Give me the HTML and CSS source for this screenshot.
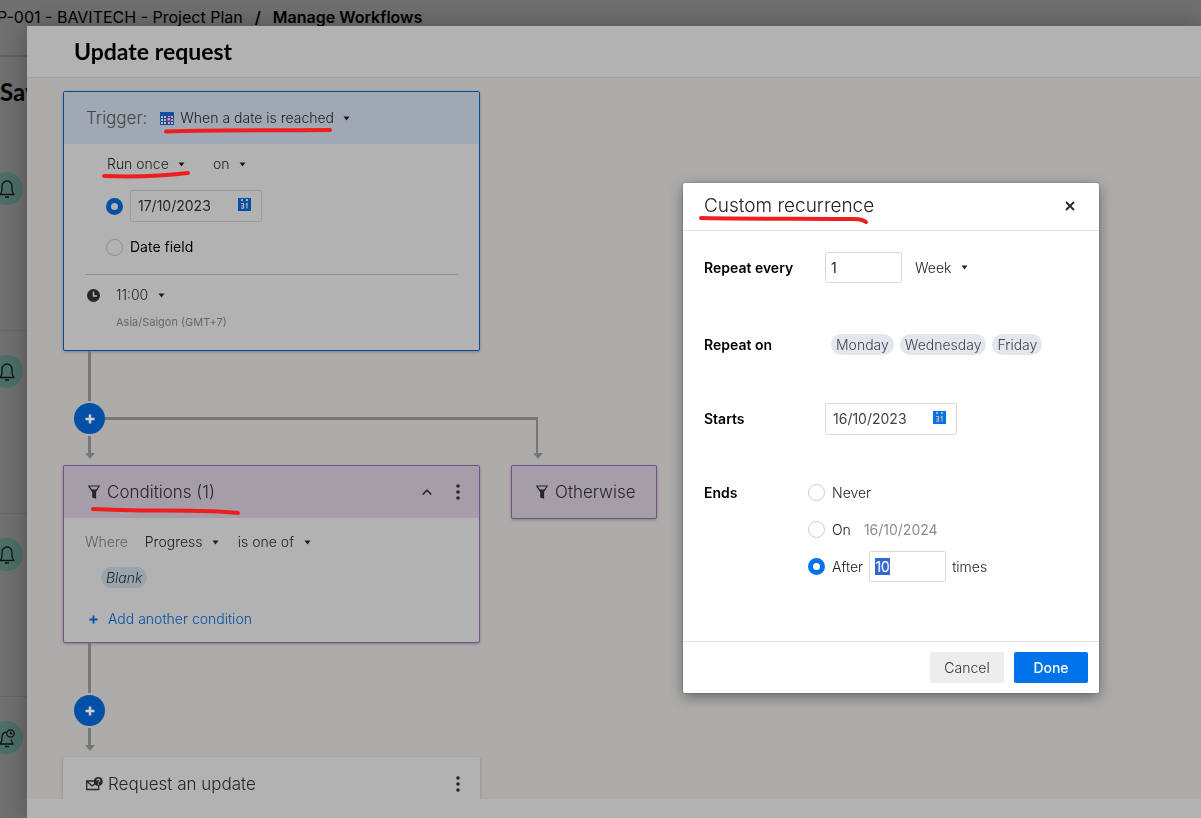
FILE: index.html
```html
<!DOCTYPE html>
<html lang="en">
<head>
<meta charset="utf-8">
<title>Manage Workflows</title>
<link rel="stylesheet" href="styles.css">
</head>
<body>
<svg class="sprite" aria-hidden="true">
  <symbol id="bell" viewBox="0 0 20 20"><path d="M3 15.500h14c-1.500-1.500-2-2.500-2-5V7A5 5 0 0 0 5 7v3.500c0 2.500-.5 3.500-2 5z" fill="none" stroke="currentColor" stroke-width="1.300" stroke-linejoin="round"/><path d="M8 18h4" stroke="currentColor" stroke-width="1.500"/></symbol>
  <symbol id="bell-clock" viewBox="0 0 20 20"><path d="M9.500 4C6.500 4.500 5 6.500 5 9v2c0 2-.5 3-2 5h13c-1-1.500-1.500-2.500-1.700-4.500" fill="none" stroke="currentColor" stroke-width="1.300"/><circle cx="13.500" cy="5.500" r="3.700" fill="none" stroke="currentColor" stroke-width="1.300"/><path d="M13.500 3.500v2h1.800M8 18.500h4" fill="none" stroke="currentColor" stroke-width="1.300"/></symbol>
  <symbol id="caret" viewBox="0 0 6 5"><path d="M0 0.500h6L3 4.500z" fill="currentColor"/></symbol>
  <symbol id="plus" viewBox="0 0 10 10"><path d="M5 0.500v9M0.500 5h9" stroke="currentColor" stroke-width="2.500"/></symbol>
  <symbol id="plus-thin" viewBox="0 0 10 10"><path d="M5 0.500v9M0.500 5h9" stroke="currentColor" stroke-width="2"/></symbol>
  <symbol id="funnel" viewBox="0 0 12 14"><path d="M.8 1h10.400L7.500 6.800V13L4.800 12V6.800z" fill="none" stroke="currentColor" stroke-width="1.200"/><path d="M2.500 4.500h7L7.200 7.500V13L5 12V7.500z" fill="currentColor"/></symbol>
  <symbol id="dots" viewBox="0 0 4 16"><circle cx="2" cy="2" r="1.800" fill="currentColor"/><circle cx="2" cy="8" r="1.800" fill="currentColor"/><circle cx="2" cy="14" r="1.800" fill="currentColor"/></symbol>
  <symbol id="calendar" viewBox="0 0 13 13"><path d="M0 0h13v13H0z" fill="currentColor"/><path class="cal-ink" d="M3 1h2v2H3zM8 1h2v2H8z"/><path class="cal-line" d="M3 5.500h2.600v4.600H3M3.500 7.800h2M7.800 6.500 9 5.500v5" fill="none" stroke-width="1.200"/></symbol>
</svg>

<div class="page">
  <nav class="breadcrumb" aria-label="Breadcrumb">
    <span>P-001 - BAVITECH - Project Plan</span><b>/</b><b>Manage Workflows</b>
  </nav>
  <h2 class="saved-title">Saved</h2>
  <ul class="saved-list">
    <li><span class="badge"><svg><use href="#bell"/></svg></span></li>
    <li><span class="badge"><svg><use href="#bell"/></svg></span></li>
    <li><span class="badge"><svg><use href="#bell"/></svg></span></li>
    <li><span class="badge"><svg><use href="#bell-clock"/></svg></span></li>
  </ul>
</div>

<main class="panel">
  <header class="panel-head"><h1>Update request</h1></header>
  <div class="canvas">
    <div class="flow">
      <section class="card trigger">
        <div class="card-head">
          <label class="title" for="event">Trigger:</label>
          <span class="event marked">
            <svg class="grid-icon" viewBox="0 0 14 13"><path d="M0 0h14v13H0z" fill="#0b50a5"/><path d="M1 4h2v2H1zM4 4h2v2H4zM8 4h2v2H8zM11 4h2v2h-2zM1 7h2v2H1zM4 7h2v2H4zM11 7h2v2h-2zM1 10h2v2H1zM4 10h2v2H4zM8 10h2v2H8zM11 10h2v2h-2z" fill="#b2b8c0"/><path d="M7 5.500h3.500v3.500H7z" fill="#b2b8c0" stroke="#b01060" stroke-width="1.200"/></svg>
            <span class="pick"><select id="event"><option>When a date is reached</option></select><svg class="caret"><use href="#caret"/></svg></span>
            <svg class="mark mark-event" viewBox="0 0 168 6"><path d="M2 3.500C50 1.500 100 2.500 166 2"/></svg>
          </span>
        </div>
        <div class="trigger-body">
          <div class="row run-row">
            <span class="pick marked"><select aria-label="Frequency"><option>Run once</option></select><svg class="caret"><use href="#caret"/></svg>
              <svg class="mark mark-run" viewBox="0 0 88 8"><path d="M2 5C30 6 60 5 86 2"/></svg></span>
            <span class="pick"><select aria-label="Run on"><option>on</option></select><svg class="caret"><use href="#caret"/></svg></span>
          </div>
          <div class="row date-row">
            <input class="radio" type="radio" name="when" aria-label="On date" checked>
            <span class="date-box"><input type="text" aria-label="Date" value="17/10/2023"><svg><use href="#calendar"/></svg></span>
          </div>
          <label class="row field-row"><input class="radio" type="radio" name="when">Date field</label>
          <div class="time">
            <svg class="clock" viewBox="0 0 13 13"><circle cx="6.500" cy="6.500" r="6.500" fill="#262626"/><path d="M6.500 2.500v4.500h3.500" fill="none" stroke="#b2b2b2" stroke-width="1.500"/></svg>
            <span class="pick"><select aria-label="Time"><option>11:00</option></select><svg class="caret"><use href="#caret"/></svg></span>
            <small>Asia/Saigon (GMT+7)</small>
          </div>
        </div>
      </section>

      <div class="link">
        <div class="stem">
          <i class="line"></i>
          <button class="add" type="button" aria-label="Add step"><svg><use href="#plus"/></svg></button>
          <svg class="arrow" viewBox="0 0 10 23"><path d="M3 0h3v17h4L5 23 0 17h3z"/></svg>
        </div>
        <svg class="branch" viewBox="0 0 440 42"><path d="M0 0h433v36h5L433 42 428 36h3V3H0z"/></svg>
      </div>

      <section class="card conditions">
        <div class="card-head">
          <svg class="funnel"><use href="#funnel"/></svg>
          <h2 class="title marked">Conditions (1)
            <svg class="mark mark-cond" viewBox="0 0 150 8"><path d="M2 2C50 5 110 2 147 6"/></svg></h2>
          <span class="tools">
            <button class="icon-btn" type="button" aria-label="Collapse"><svg class="chevron" viewBox="0 0 10 6"><path d="M.7 5.500 5 1.200l4.300 4.300" fill="none" stroke="currentColor" stroke-width="1.600"/></svg></button>
            <button class="icon-btn" type="button" aria-label="More"><svg class="dots"><use href="#dots"/></svg></button>
          </span>
        </div>
        <div class="cond-body">
          <div class="row where">
            <span>Where</span>
            <span class="pick"><select aria-label="Field"><option>Progress</option></select><svg class="caret"><use href="#caret"/></svg></span>
            <span class="pick"><select aria-label="Operator"><option>is one of</option></select><svg class="caret"><use href="#caret"/></svg></span>
          </div>
          <em class="pill blank">Blank</em>
          <button class="add-cond" type="button"><svg><use href="#plus-thin"/></svg>Add another condition</button>
        </div>
      </section>
      <section class="card otherwise">
        <svg class="funnel"><use href="#funnel"/></svg><h2 class="title">Otherwise</h2>
      </section>

      <div class="link">
        <div class="stem">
          <i class="line"></i>
          <button class="add" type="button" aria-label="Add step"><svg><use href="#plus"/></svg></button>
          <svg class="arrow" viewBox="0 0 10 23"><path d="M3 0h3v17h4L5 23 0 17h3z"/></svg>
        </div>
      </div>

      <section class="card request">
        <div class="card-head">
          <svg class="mail" viewBox="0 0 17 14"><path d="M8 4H.700v8.500h12V9M.700 4.300l5.500 4.700 3-2.500" fill="none" stroke="#262626" stroke-width="1.300"/><circle cx="12.300" cy="4.500" r="4.500" fill="#262626"/><path d="M10.800 3.600c.1-2 3-1.900 3 0 0 1-1.500 1-1.500 2M12.300 6.500v1.200" fill="none" stroke="#b2b2b2" stroke-width="1.100"/></svg>
          <h2 class="title">Request an update</h2>
          <span class="tools"><button class="icon-btn" type="button" aria-label="More"><svg class="dots"><use href="#dots"/></svg></button></span>
        </div>
      </section>
    </div>
  </div>
  <footer class="panel-foot"></footer>
</main>

<form class="dialog" role="dialog" aria-labelledby="dialog-title">
  <header class="dialog-head">
    <h2 id="dialog-title" class="marked">Custom recurrence
      <svg class="mark mark-dialog" viewBox="0 0 170 8"><path d="M2 2C60 3 100 2.500 155 3Q163 3 167 6"/></svg></h2>
    <button class="icon-btn" type="button" aria-label="Close"><svg class="close" viewBox="0 0 10 10"><path d="m1 1 8 8M9 1 1 9" stroke="currentColor" stroke-width="1.800"/></svg></button>
  </header>
  <div class="dialog-body">
    <div class="form-row">
      <label class="name" for="every">Repeat every</label>
      <input class="num" id="every" type="text" value="1">
      <span class="pick unit"><select aria-label="Unit"><option>Week</option></select><svg class="caret"><use href="#caret"/></svg></span>
    </div>
    <div class="form-row days">
      <span class="name">Repeat on</span>
      <span class="pills"><span class="pill">Monday</span><span class="pill">Wednesday</span><span class="pill">Friday</span></span>
    </div>
    <div class="form-row">
      <label class="name" for="starts">Starts</label>
      <span class="date-box"><input id="starts" type="text" value="16/10/2023"><svg><use href="#calendar"/></svg></span>
    </div>
    <div class="form-row ends">
      <span class="name">Ends</span>
      <div class="choices">
        <label class="choice"><input class="radio" type="radio" name="ends">Never</label>
        <div class="choice"><label><input class="radio" type="radio" name="ends">On</label><span class="muted">16/10/2024</span></div>
        <div class="choice after"><label><input class="radio" type="radio" name="ends" checked>After</label><input class="num" id="times" type="text" value="10" aria-label="Number of times"><span>times</span></div>
      </div>
    </div>
  </div>
  <footer class="dialog-foot">
    <button class="btn" type="button">Cancel</button>
    <button class="btn primary" type="button">Done</button>
  </footer>
</form>
<script src="script.js"></script>
</body>
</html>
```
FILE: styles.css
```css
* { box-sizing: border-box; }
html, body { height: 100%; }
body {
  margin: 0;
  overflow: hidden;
  background: #707070;
  color: #1c1c1c;
  font: 300 14px/20px Inter, "Liberation Sans", sans-serif;
}
h1, h2, ul { margin: 0; padding: 0; font-weight: inherit; font-size: inherit; }
button, input, select { font: inherit; color: inherit; margin: 0; padding: 0; border: 0; background: none; outline: none; }
svg { display: block; flex: none; }
.sprite { position: absolute; width: 0; height: 0; }

/* page under the panel */
.page { height: 100%; overflow: hidden; }
.breadcrumb {
  display: flex;
  gap: 12px;
  height: 57px;
  padding-top: 7px;
  margin-left: -3px;
  border-bottom: 2px solid #606060;
  color: #000;
  font-size: 16px;
  font-weight: 400;
  white-space: nowrap;
}
.breadcrumb b { font-weight: 600; }
.saved-title { height: 91px; padding-top: 19px; font: 700 24px/32px Lato, sans-serif; color: #000; }
.saved-list { list-style: none; }
.saved-list li { display: flex; align-items: center; height: 183px; padding-bottom: 101px; border-bottom: 1px solid #666; }
.badge {
  display: flex;
  align-items: center;
  justify-content: center;
  width: 33px;
  height: 33px;
  margin-left: -10px;
  border-radius: 50%;
  background: #4c6f67;
  color: #101515;
}
.badge svg { width: 20px; height: 20px; }

/* panel */
.panel {
  position: fixed;
  inset: 26px 0 0 27px;
  display: flex;
  flex-direction: column;
  background: #b2b2b2;
  box-shadow: 0 0 24px rgba(0, 0, 0, 0.3);
}
.panel-head { height: 52px; padding: 9px 47px; border-bottom: 1px solid #9f9f9f; }
.panel-head h1 { font: 700 23px/32px Lato, sans-serif; color: #000; }
.canvas { flex: 1; min-height: 0; overflow: hidden; padding: 13px 36px; background: #adacaa; }
.panel-foot { height: 19px; flex: none; }

.flow {
  display: grid;
  grid-template-columns: 417px 146px;
  column-gap: 31px;
  align-items: start;
}
.card { grid-column: 1; border: 1px solid; border-radius: 2px; background: #b2b2b2; box-shadow: 0 1px 3px rgba(0, 0, 0, 0.25); }
.card-head { display: flex; align-items: center; height: 52px; padding: 0 16px 0 22px; }
.title { font-size: 17px; line-height: 24px; font-weight: 300; color: #262626; white-space: nowrap; }
.trigger { border-color: #084a9c; }
.trigger .card-head { background: #a0a9b3; gap: 13px; }
.trigger .title { color: #444; }
.event { display: flex; align-items: center; gap: 6px; }
.grid-icon { width: 14px; height: 13px; }

.pick { display: inline-flex; align-items: center; gap: 9px; }
.pick select { appearance: none; height: 24px; }
.caret { width: 7px; height: 5px; }

.trigger-body { padding: 8px 21px 18px; }
.row { display: flex; align-items: center; }
.run-row { gap: 28px; padding-left: 22px; height: 24px; }
.date-row, .field-row { gap: 7px; padding-left: 21px; }
.date-row { margin-top: 14px; }
.field-row { margin-top: 15px; color: #000; font-weight: 400; }
.radio {
  appearance: none;
  flex: none;
  width: 17px;
  height: 17px;
  border: 1px solid #8c8c8c;
  border-radius: 50%;
}
.radio:checked { border: 5px solid #0350a6; }
.date-box {
  display: flex;
  align-items: center;
  width: 132px;
  height: 32px;
  padding: 0 10px 0 7px;
  border: 1px solid #9a9a9a;
  border-radius: 2px;
  color: #0350a6;
}
.date-box input { flex: 1; min-width: 0; color: #262626; font-weight: 400; }
.date-box svg { width: 13px; height: 13px; margin-bottom: 4px; }
.cal-ink { fill: #b2b2b2; }
.cal-line { stroke: #b2b2b2; }
.time {
  display: grid;
  grid-template-columns: 31px 1fr;
  align-items: center;
  row-gap: 5px;
  margin-top: 17px;
  padding-top: 8px;
  border-top: 1px solid #8f8f8f;
}
.clock { width: 13px; height: 13px; margin-left: 2px; }
.time small { grid-column: 2; font-size: 11px; font-weight: 400; color: #666; }

/* connectors */
.link { grid-column: 1 / -1; display: flex; height: 114px; padding-left: 11px; }
.stem { display: flex; flex-direction: column; align-items: center; gap: 2px; }
.line { width: 3px; height: 50px; background: #777; }
.add {
  display: flex;
  align-items: center;
  justify-content: center;
  width: 31px;
  height: 31px;
  border-radius: 50%;
  background: #0350a6;
  color: #d0d0d0;
}
.add svg { width: 10px; height: 10px; }
.arrow { width: 10px; height: 23px; fill: #777; }
.branch { width: 440px; height: 42px; margin-top: 66px; fill: #777; }

.conditions, .otherwise { border-color: #735092; }
.conditions .card-head, .otherwise { background: #a59ea9; }
.otherwise { grid-column: 2; display: flex; align-items: center; height: 54px; padding-left: 24px; gap: 7px; }
.funnel { width: 12px; height: 14px; color: #262626; }
.conditions .funnel { margin: 0 7px 0 2px; }
.tools { display: flex; margin-left: auto; gap: 20px; }
.icon-btn { display: flex; align-items: center; justify-content: center; width: 11px; height: 24px; color: #262626; }
.chevron { width: 10px; height: 6px; }
.dots { width: 4px; height: 16px; }
.cond-body { padding: 12px 21px 11px; }
.where { height: 24px; color: #5f5f5f; }
.where .pick { margin-left: 17px; color: #1c1c1c; }
.where .pick + .pick { margin-left: 19px; }
.pill { padding: 0 5px; border-radius: 11px; line-height: 21px; height: 21px; background: #e1e7ed; color: #444; }
.blank { display: block; width: max-content; margin: 13px 0 0 16px; background: #9aa4ac; color: #262626; }
.add-cond { display: flex; align-items: center; gap: 10px; margin-top: 19px; padding-left: 4px; height: 24px; color: #0350a6; }
.add-cond svg { width: 9px; height: 9px; }
.request { border-color: #b2b2b2; height: 120px; }
.mail { width: 17px; height: 14px; margin-right: 5px; }

/* hand-drawn red underlines */
.marked { position: relative; }
.mark { position: absolute; z-index: 1; fill: none; stroke: #ef1d1d; stroke-width: 4; stroke-linecap: round; overflow: visible; pointer-events: none; }
.mark-event { width: 168px; height: 6px; left: 4px; top: 22px; }
.mark-run { width: 88px; height: 8px; left: -5px; top: 19px; }
.mark-cond { width: 150px; height: 8px; left: -16px; top: 27px; }
.mark-dialog { width: 170px; height: 8px; left: -5px; top: 22px; }

/* dialog */
.dialog {
  position: fixed;
  left: 683px;
  top: 183px;
  width: 416px;
  border-radius: 2px;
  background: #fff;
  color: #222;
  box-shadow: 0 4px 14px rgba(0, 0, 0, 0.4), 0 0 2px rgba(0, 0, 0, 0.3);
}
.dialog-head { display: flex; align-items: center; justify-content: space-between; height: 48px; padding: 0 24px 2px 21px; border-bottom: 1px solid #e3e3e3; }
.dialog-head h2 { font-size: 19px; line-height: 24px; }
.close { width: 10px; height: 10px; }
.dialog-body { display: flex; flex-direction: column; gap: 43px; padding: 21px 20px 59px 21px; }
.form-row { display: grid; grid-template-columns: 121px auto 1fr; align-items: center; min-height: 31px; }
.days { margin-top: 3px; }
.name { font-weight: 600; color: #000; }
.num { width: 77px; height: 31px; padding-left: 5px; border: 1px solid #d9d9d9; border-radius: 2px; font-weight: 400; }
.unit { margin-left: 13px; }
.pills { display: flex; gap: 6px; margin-left: 6px; }
.dialog .date-box { color: #0073ea; border-color: #d9d9d9; }
.dialog .date-box input { color: #444; }
.dialog .cal-ink { fill: #fff; }
.dialog .cal-line { stroke: #fff; }
.ends { align-items: start; margin-top: -1px; }
.ends .name { line-height: 31px; }
.choices { display: flex; flex-direction: column; gap: 6px; margin-left: -17px; }
.choice { display: flex; align-items: center; height: 31px; }
.choice label { display: flex; align-items: center; }
.choice .radio { margin-right: 7px; }
.dialog .radio { border-color: #ccc; }
.dialog .radio:checked { border-color: #0073ea; }
.muted { margin-left: 13px; color: #8c8c8c; font-weight: 400; }
.after { gap: 6px; }
#times::selection { background: #3367d1; color: #fff; }
.dialog-foot { display: flex; justify-content: flex-end; gap: 10px; padding: 10px 11px; border-top: 1px solid #e3e3e3; }
.btn { height: 31px; width: 74px; border-radius: 2px; background: #ededed; color: #333; }
.primary { background: #0073ea; color: #fff; font-weight: 500; }
```
FILE: script.js
```js
const times = document.getElementById("times");
times.focus();
times.select();
```
